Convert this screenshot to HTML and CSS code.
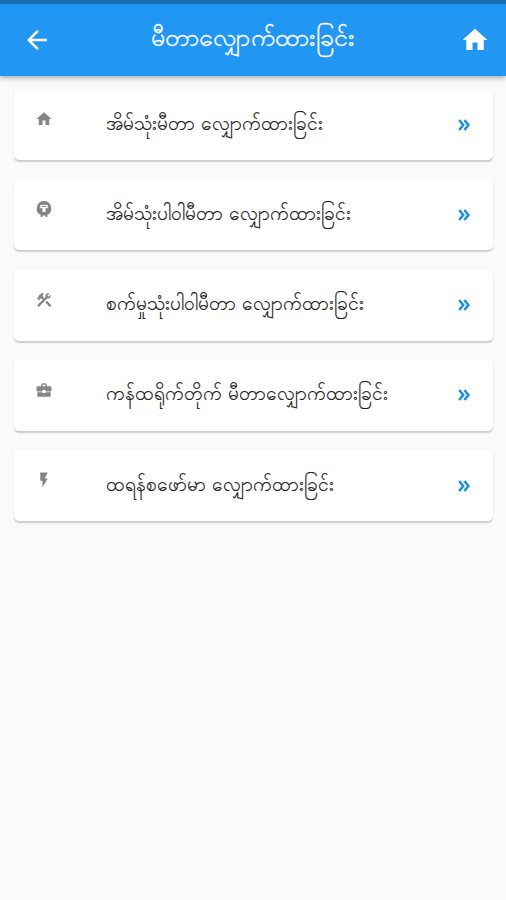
FILE: index.html
```html
<!DOCTYPE html>
<html lang="my">
<head>
<meta charset="utf-8">
<title>မီတာလျှောက်ထားခြင်း</title>
<link rel="stylesheet" href="styles.css">
</head>
<body>
<header class="bar">
<svg class="icon" viewBox="0 0 24 24"><path d="M20 11H7.83l5.59-5.59L12 4l-8 8 8 8 1.41-1.41L7.83 13H20v-2z"/></svg>
<h1 class="title">မီတာလျှောက်ထားခြင်း</h1>
<svg class="icon" viewBox="0 0 24 24"><path d="M10 20v-6h4v6h5v-8h3L12 3 2 12h3v8z"/></svg>
</header>
<main class="list">
<div class="card">
<svg class="lead" viewBox="0 0 24 24"><path d="M10 20v-6h4v6h5v-8h3L12 3 2 12h3v8z"/></svg>
<span class="label">အိမ်သုံးမီတာ လျှောက်ထားခြင်း</span>
<svg class="more" viewBox="0 0 12 12"><path d="M1.2 1l4 5-4 5M6.4 1l4 5-4 5"/></svg>
</div>
<div class="card">
<svg class="lead" viewBox="0 0 24 24"><path fill-rule="evenodd" d="M12 1.500a9.700 9.700 0 0 1 4.500 18.300V22.500h-2.500v-2h-4v2H7.500v-2.700A9.700 9.700 0 0 1 12 1.500zM7 6.500V11h3v5h4v-5h3V6.500zm2 1.500h6v1.300H9z"/></svg>
<span class="label">အိမ်သုံးပါဝါမီတာ လျှောက်ထားခြင်း</span>
<svg class="more" viewBox="0 0 12 12"><path d="M1.2 1l4 5-4 5M6.4 1l4 5-4 5"/></svg>
</div>
<div class="card">
<svg class="lead" viewBox="0 0 24 24"><path d="M13.780 15.300l6 6 2.110-2.160-6-6zM17.500 10.100c-.39 0-.81-.05-1.140-.19L4.970 21.250l-2.110-2.110 7.410-7.400L8.500 9.960l-.72.7-1.450-1.410v2.860l-.7.7-3.520-3.560.7-.7h2.810l-1.400-1.410 3.560-3.560a2.976 2.976 0 0 1 4.220 0L9.890 5.740l1.410 1.400-.71.71 1.790 1.780 1.820-1.880c-.14-.33-.2-.75-.2-1.120a3.490 3.490 0 0 1 3.500-3.520c.59 0 1.110.14 1.580.42L16.410 6.200l1.500 1.500 2.670-2.670c.28.47.42.97.42 1.600 0 1.920-1.550 3.470-3.500 3.470z"/></svg>
<span class="label">စက်မှုသုံးပါဝါမီတာ လျှောက်ထားခြင်း</span>
<svg class="more" viewBox="0 0 12 12"><path d="M1.2 1l4 5-4 5M6.4 1l4 5-4 5"/></svg>
</div>
<div class="card">
<svg class="lead" viewBox="0 0 24 24"><path d="M10 16v-1H3.010L3 19c0 1.110.89 2 2 2h14c1.110 0 2-.89 2-2v-4h-7v1h-4zm10-9h-4.010V5l-2-2h-4l-2 2v2H4c-1.100 0-2 .9-2 2v3c0 1.110.89 2 2 2h6v-2h4v2h6c1.100 0 2-.9 2-2V9c0-1.100-.9-2-2-2zm-6 0h-4V5h4v2z"/></svg>
<span class="label">ကန်ထရိုက်တိုက် မီတာလျှောက်ထားခြင်း</span>
<svg class="more" viewBox="0 0 12 12"><path d="M1.2 1l4 5-4 5M6.4 1l4 5-4 5"/></svg>
</div>
<div class="card">
<svg class="lead" viewBox="0 0 24 24"><path d="M7 2v11h3v9l7-12h-4l4-8z"/></svg>
<span class="label">ထရန်စဖော်မာ လျှောက်ထားခြင်း</span>
<svg class="more" viewBox="0 0 12 12"><path d="M1.2 1l4 5-4 5M6.4 1l4 5-4 5"/></svg>
</div>
</main>
</body>
</html>
```
FILE: styles.css
```css
body {
  margin: 0;
  background: #fafafa;
  font-family: Roboto, "Noto Sans", sans-serif;
}
.bar {
  box-sizing: border-box;
  height: 76px;
  padding: 0 16px 0 22px;
  border-top: 4px solid #1770b5;
  background: #2196f3;
  color: #fff;
  display: flex;
  align-items: center;
  box-shadow: 0 2px 5px rgba(0, 0, 0, .32);
}
.icon {
  flex: none;
  width: 30px;
  height: 30px;
  margin-bottom: 1px;
  fill: currentColor;
}
.title {
  flex: 1;
  margin: 0 7px 4px 0;
  font-size: 25px;
  line-height: 40px;
  font-weight: 400;
  letter-spacing: .4px;
  text-align: center;
  white-space: nowrap;
  -webkit-text-stroke: .3px currentColor;
}
.list {
  display: grid;
  gap: 19.300px;
  padding: 13px 13px 4px 14px;
}
.card {
  box-sizing: border-box;
  height: 71px;
  padding: 0 23px 0 21px;
  display: flex;
  align-items: center;
  border-radius: 5px;
  background: #fff;
  box-shadow: 0 1.500px 1.500px rgba(0, 0, 0, .18);
}
.lead {
  flex: none;
  width: 18px;
  height: 18px;
  margin: 0 52.500px 11px 0;
  fill: #858585;
}
.label {
  flex: 1;
  margin-bottom: 2px;
  color: #222;
  font-size: 19px;
  line-height: 30px;
  word-spacing: 2px;
  white-space: nowrap;
  -webkit-text-stroke: .15px currentColor;
}
.more {
  flex: none;
  width: 12px;
  height: 12px;
  fill: none;
  stroke: #1a8fdc;
  stroke-width: 2.500;
}
```
